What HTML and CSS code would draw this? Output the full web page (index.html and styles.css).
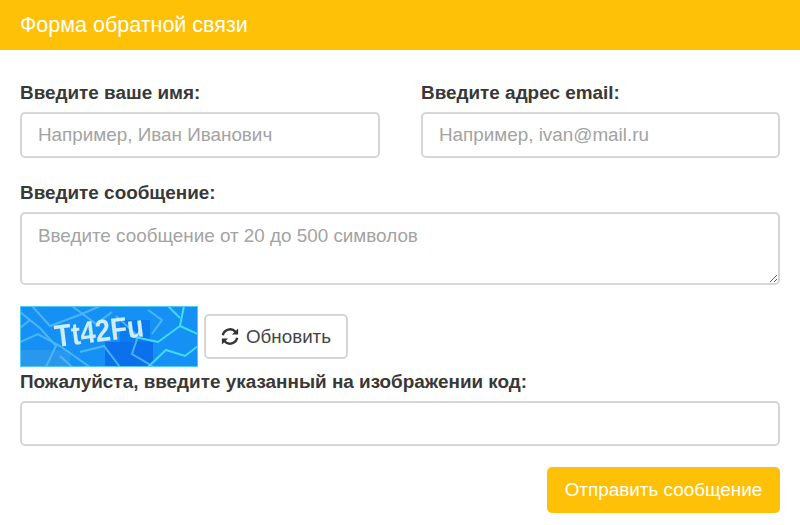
FILE: index.html
```html
<!DOCTYPE html>
<html lang="en">

<head>
    <meta charset="UTF-8">
    <meta name="viewport" content="width=device-width, initial-scale=1.0">
    <title>Форма обратной связи</title>
    <link rel="stylesheet" href="styles.css">
</head>

<body>

    <div class="panel-heading">Форма обратной связи</div>

    <form class="form" action="#" method="POST">
        <!-- Name and email -->
        <div class="form-row">
            <div class="form-group">
                <label for="name">Введите ваше имя:</label>
                <input type="text" id="name" placeholder="Например, Иван Иванович">
            </div>
            <div class="form-group">
                <label for="email">Введите адрес email:</label>
                <input type="text" id="email" placeholder="Например, ivan@mail.ru">
            </div>
        </div>

        <div class="form-group">
            <label for="message">Введите сообщение:</label>
            <textarea id="message" placeholder="Введите сообщение от 20 до 500 символов"></textarea>
        </div>

        <!-- Captcha -->
        <div class="captcha-row">
            <svg class="captcha" width="178" height="61" viewBox="0 0 178 61">
                <rect width="178" height="61" fill="#1590f4"/>
                <rect x="85" y="36" width="48" height="25" fill="#0a70ec"/>
                <rect x="100" y="14" width="30" height="22" fill="#0b7cf0"/>
                <rect x="0" y="44" width="50" height="17" fill="#2a97ee"/>
                <g fill="none" stroke="#55bcf8" stroke-width="2" opacity="0.85">
                    <path d="M0 6 L20 22 L36 40 L26 61"/>
                    <path d="M12 0 L30 20 L62 8 L80 0"/>
                    <path d="M0 36 L18 28 L40 40 L70 61"/>
                    <path d="M52 0 L76 18 L92 6"/>
                    <path d="M96 10 L118 30 L112 48 L134 61"/>
                    <path d="M60 46 L84 40 L100 61"/>
                    <path d="M128 4 L142 14 L132 28"/>
                    <path d="M40 50 L52 61"/>
                    <path d="M0 22 L10 14"/>
                </g>
                <g fill="none" stroke="#42dcf0" stroke-width="2">
                    <path d="M110 30 L138 36 L160 20 L164 0"/>
                    <path d="M128 61 L146 44 L165 50 L178 40"/>
                    <path d="M160 20 L178 28"/>
                    <path d="M148 0 L160 12"/>
                </g>
                <text class="captcha-text" transform="translate(36 41) rotate(-7) scale(0.88 1)">Tt42Fu</text>
                <rect x="0.5" y="0.5" width="177" height="60" fill="none" stroke="#4fcaf5"/>
            </svg>
            <button type="button" class="btn-refresh">
                <svg width="18" height="17" viewBox="0 0 18 18" fill="none" stroke="#333" stroke-width="2.6">
                    <path d="M1.4 7.6 A7.8 7.8 0 0 1 14.8 4"/>
                    <path d="M16.6 10.4 A7.8 7.8 0 0 1 3.2 14"/>
                    <path d="M17.6 0.4 V7 H11 Z" fill="#333" stroke="none"/>
                    <path d="M0.4 17.6 V11 H7 Z" fill="#333" stroke="none"/>
                </svg>
                Обновить
            </button>
        </div>

        <div class="form-group">
            <label for="code">Пожалуйста, введите указанный на изображении код:</label>
            <input type="text" id="code" class="input-code">
        </div>

        <div class="form-actions">
            <button type="submit" class="btn-send">Отправить сообщение</button>
        </div>
    </form>

</body>

</html>
```

FILE: styles.css
```css
* {
    box-sizing: border-box;
}

body {
    font-family: "Liberation Sans", Arial, sans-serif;
    font-size: 19px;
    color: #383838;
    background-color: #fff;
    margin: 0;
    padding: 0;
    overflow: hidden;
}

.panel-heading {
    height: 50px;
    padding: 0 20px;
    line-height: 50px;
    font-size: 21.5px;
    color: #fff;
    background-color: #ffc107;
}

.form {
    padding: 29px 20px 0;
}

.form-row {
    display: grid;
    grid-template-columns: 360px 359px;
    gap: 41px;
}

.form-group {
    margin-bottom: 21px;
}

.form-group label {
    display: block;
    height: 33px;
    font-size: 18.9px;
    font-weight: bold;
    line-height: 27px;
}

.form-group input,
.form-group textarea {
    display: block;
    width: 100%;
    height: 46px;
    padding: 0 16px;
    font-family: inherit;
    font-size: 18.85px;
    color: #333;
    background-color: #fff;
    border: 2px solid #d6d6d6;
    border-radius: 5px;
}

.form-group .input-code {
    height: 45px;
}

.form-group textarea {
    height: 73px;
    padding-top: 11px;
    resize: vertical;
}

input::placeholder,
textarea::placeholder {
    color: #a3a3a3;
    opacity: 1;
}

.captcha-row {
    display: flex;
    align-items: flex-end;
    gap: 6px;
    margin-bottom: 1px;
}

.captcha {
    display: block;
    filter: blur(0.7px);
}

.captcha-text {
    font-family: "Liberation Sans", Arial, sans-serif;
    font-size: 31px;
    font-weight: bold;
    fill: #cdeef8;
}

.btn-refresh {
    display: flex;
    align-items: center;
    justify-content: center;
    gap: 7px;
    width: 144px;
    height: 45px;
    margin-bottom: 8px;
    font-family: inherit;
    font-size: 18.8px;
    color: #444;
    background-color: #fff;
    border: 2px solid #d6d6d6;
    border-radius: 5px;
}

.form-actions {
    display: flex;
    justify-content: flex-end;
}

.btn-send {
    width: 233px;
    height: 46px;
    font-family: inherit;
    font-size: 18.9px;
    color: #fff;
    background-color: #ffc107;
    border: none;
    border-radius: 5px;
}
```
